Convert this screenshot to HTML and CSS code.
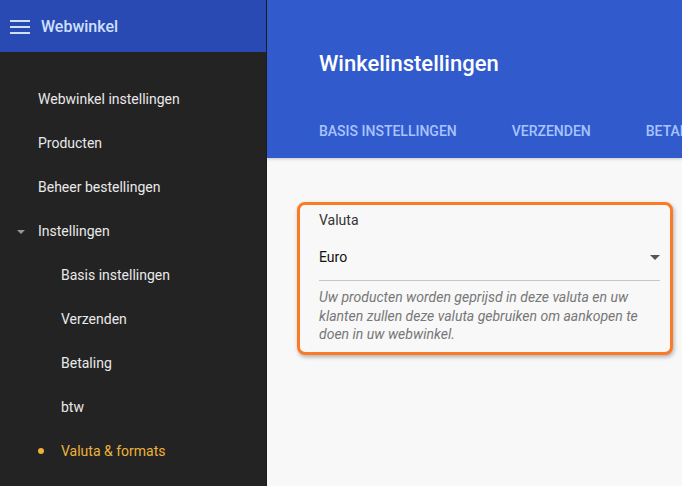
FILE: index.html
```html
<!DOCTYPE html>
<html lang="nl">
<head>
<meta charset="utf-8">
<title>Winkelinstellingen</title>
<link rel="stylesheet" href="styles.css">
</head>
<body>
<div class="app">
  <aside class="sidebar">
    <div class="side-head">
      <svg class="burger" width="20" height="14" viewBox="0 0 20 14"><rect x="0" y="0" width="20" height="2" fill="#cfe0ff"/><rect x="0" y="6" width="20" height="2" fill="#cfe0ff"/><rect x="0" y="12" width="20" height="2" fill="#cfe0ff"/></svg>
      <span class="brand">Webwinkel</span>
    </div>
    <nav class="nav">
      <div class="item">Webwinkel instellingen</div>
      <div class="item">Producten</div>
      <div class="item">Beheer bestellingen</div>
      <div class="item open"><span class="caret"></span>Instellingen</div>
      <div class="item sub">Basis instellingen</div>
      <div class="item sub">Verzenden</div>
      <div class="item sub">Betaling</div>
      <div class="item sub">btw</div>
      <div class="item sub active"><span class="dot"></span>Valuta &amp; formats</div>
    </nav>
  </aside>
  <main class="main">
    <header class="header">
      <h1 class="title">Winkelinstellingen</h1>
      <div class="tabs">
        <span class="tab">Basis instellingen</span>
        <span class="tab">Verzenden</span>
        <span class="tab">Betaling</span>
      </div>
    </header>
    <section class="content">
      <div class="card">
        <div class="label">Valuta</div>
        <div class="select">
          <span>Euro</span>
          <span class="arrow"></span>
        </div>
        <p class="hint">Uw producten worden geprijsd in deze valuta en uw klanten zullen deze valuta gebruiken om aankopen te doen in uw webwinkel.</p>
      </div>
    </section>
  </main>
</div>
</body>
</html>
```

FILE: styles.css
```css
* { box-sizing: border-box; }
html, body { margin: 0; padding: 0; }
body {
  font-family: Roboto, "Liberation Sans", sans-serif;
  width: 682px;
  height: 486px;
  overflow: hidden;
  background: #f8f8f8;
}
.app {
  display: flex;
  height: 486px;
}
.sidebar {
  width: 267px;
  flex: none;
  background: #232323;
  border-right: 1px solid #1c1c1c;
}
.side-head {
  height: 52px;
  background: #2a4ab3;
  display: flex;
  align-items: center;
  padding-left: 10px;
}
.burger { margin-right: 11px; margin-top: 1px; }
.brand {
  color: #cfe0ff;
  font-size: 16px;
  font-weight: 500;
}
.nav { padding-top: 25px; }
.item {
  height: 44px;
  display: flex;
  align-items: center;
  padding-left: 38px;
  color: #e9e9e9;
  font-size: 14px;
  position: relative;
}
.item.sub { padding-left: 61px; }
.caret {
  position: absolute;
  left: 17px;
  top: 21px;
  width: 0; height: 0;
  border-left: 4px solid transparent;
  border-right: 4px solid transparent;
  border-top: 4px solid #959595;
}
.item.active { color: #eeb23a; }
.dot {
  position: absolute;
  left: 38px;
  top: 19px;
  width: 6px; height: 6px;
  border-radius: 50%;
  background: #eeb23a;
}
.main {
  flex: 1;
  display: flex;
  flex-direction: column;
  min-width: 0;
  overflow: hidden;
}
.header {
  height: 158px;
  flex: none;
  background: #315bcd;
  padding-left: 52px;
  box-shadow: 0 1px 3px rgba(0,0,0,0.2);
  position: relative;
  z-index: 1;
}
.title {
  margin: 0;
  padding-top: 50px;
  color: #ffffff;
  font-size: 22px;
  font-weight: 500;
  line-height: 28px;
}
.tabs {
  display: flex;
  gap: 55px;
  margin-top: 44px;
  white-space: nowrap;
}
.tab {
  color: #a9c3ff;
  font-size: 14px;
  font-weight: 500;
  text-transform: uppercase;
  line-height: 18px;
}
.content {
  flex: 1;
  padding: 44px 10px 0 30px;
}
.card {
  width: 376px;
  border: 3px solid #fb7a28;
  border-radius: 8px;
  box-shadow: 1px 2px 4px rgba(0,0,0,0.3);
  padding: 6px 10px 8px 19px;
  background: #f8f8f8;
}
.label {
  font-size: 14px;
  color: #333;
  line-height: 18px;
}
.select {
  margin-top: 18px;
  display: flex;
  justify-content: space-between;
  align-items: center;
  font-size: 14px;
  color: #111;
  height: 20px;
  padding-right: 0;
}
.arrow {
  width: 0; height: 0;
  border-left: 5px solid transparent;
  border-right: 5px solid transparent;
  border-top: 5px solid #555;
}
.hint {
  margin: 13px 0 0;
  padding-top: 7px;
  border-top: 1px solid #c6c6c6;
  font-size: 14px;
  font-style: italic;
  color: #777;
  line-height: 18.5px;
  padding-right: 3px;
}
```
